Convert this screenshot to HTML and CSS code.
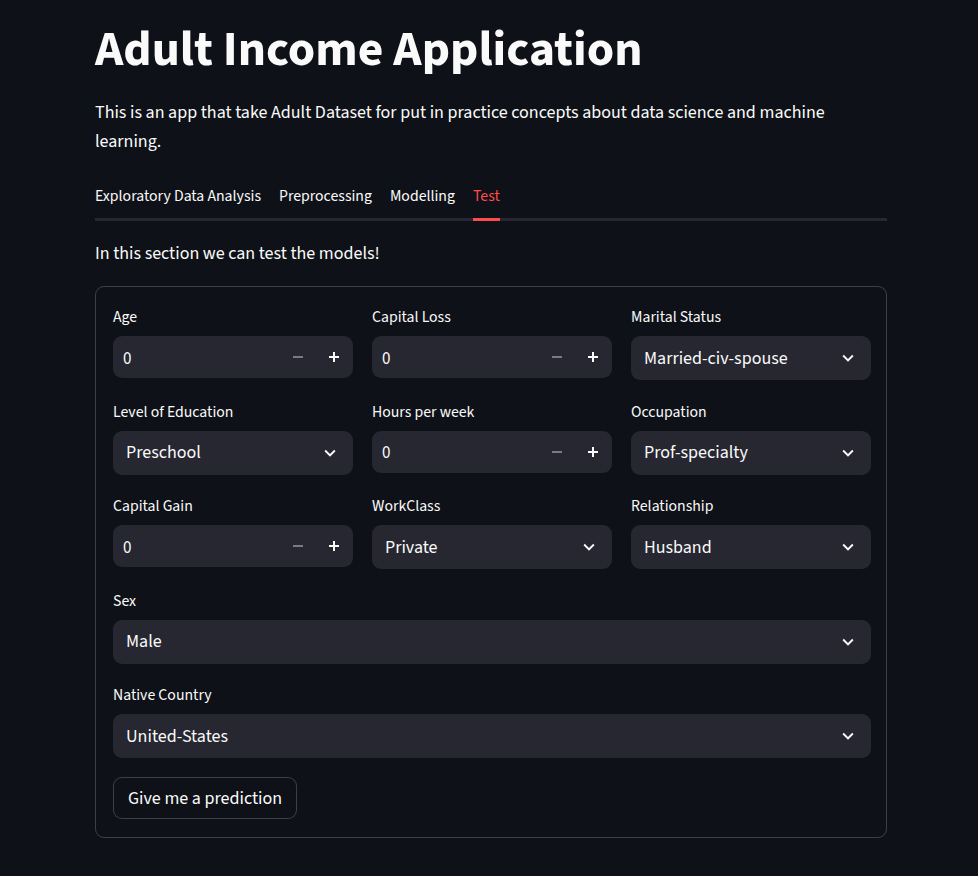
FILE: index.html
```html
<!DOCTYPE html>
<html lang="en">
<head>
<meta charset="utf-8">
<title>Adult Income Application</title>
<link rel="stylesheet" href="styles.css">
</head>
<body>
<main class="main">
  <h1 class="title">Adult Income Application</h1>
  <p class="intro">This is an app that take Adult Dataset for put in practice concepts about data science and machine learning.</p>

  <nav class="tabs">
    <span class="tab">Exploratory Data Analysis</span>
    <span class="tab">Preprocessing</span>
    <span class="tab">Modelling</span>
    <span class="tab active">Test</span>
  </nav>

  <p class="section">In this section we can test the models!</p>

  <form class="form">
    <div class="grid">
      <div class="field">
        <label class="label">Age</label>
        <div class="number">
          <span class="value">0</span>
          <span class="step minus"><svg viewBox="0 0 10 10" width="10" height="10"><path d="M0 5h10" stroke="currentColor" stroke-width="2"/></svg></span>
          <span class="step plus"><svg viewBox="0 0 10 10" width="10" height="10"><path d="M0 5h10M5 0v10" stroke="currentColor" stroke-width="2"/></svg></span>
        </div>
      </div>
      <div class="field">
        <label class="label">Capital Loss</label>
        <div class="number">
          <span class="value">0</span>
          <span class="step minus"><svg viewBox="0 0 10 10" width="10" height="10"><path d="M0 5h10" stroke="currentColor" stroke-width="2"/></svg></span>
          <span class="step plus"><svg viewBox="0 0 10 10" width="10" height="10"><path d="M0 5h10M5 0v10" stroke="currentColor" stroke-width="2"/></svg></span>
        </div>
      </div>
      <div class="field">
        <label class="label">Marital Status</label>
        <div class="select">
          <span class="value">Married-civ-spouse</span>
          <svg class="chev" viewBox="0 0 24 24" width="22" height="22"><path d="M16.59 8.59L12 13.17 7.41 8.59 6 10l6 6 6-6z" fill="currentColor"/></svg>
        </div>
      </div>

      <div class="field">
        <label class="label">Level of Education</label>
        <div class="select">
          <span class="value">Preschool</span>
          <svg class="chev" viewBox="0 0 24 24" width="22" height="22"><path d="M16.59 8.59L12 13.17 7.41 8.59 6 10l6 6 6-6z" fill="currentColor"/></svg>
        </div>
      </div>
      <div class="field">
        <label class="label">Hours per week</label>
        <div class="number">
          <span class="value">0</span>
          <span class="step minus"><svg viewBox="0 0 10 10" width="10" height="10"><path d="M0 5h10" stroke="currentColor" stroke-width="2"/></svg></span>
          <span class="step plus"><svg viewBox="0 0 10 10" width="10" height="10"><path d="M0 5h10M5 0v10" stroke="currentColor" stroke-width="2"/></svg></span>
        </div>
      </div>
      <div class="field">
        <label class="label">Occupation</label>
        <div class="select">
          <span class="value">Prof-specialty</span>
          <svg class="chev" viewBox="0 0 24 24" width="22" height="22"><path d="M16.59 8.59L12 13.17 7.41 8.59 6 10l6 6 6-6z" fill="currentColor"/></svg>
        </div>
      </div>

      <div class="field">
        <label class="label">Capital Gain</label>
        <div class="number">
          <span class="value">0</span>
          <span class="step minus"><svg viewBox="0 0 10 10" width="10" height="10"><path d="M0 5h10" stroke="currentColor" stroke-width="2"/></svg></span>
          <span class="step plus"><svg viewBox="0 0 10 10" width="10" height="10"><path d="M0 5h10M5 0v10" stroke="currentColor" stroke-width="2"/></svg></span>
        </div>
      </div>
      <div class="field">
        <label class="label">WorkClass</label>
        <div class="select">
          <span class="value">Private</span>
          <svg class="chev" viewBox="0 0 24 24" width="22" height="22"><path d="M16.59 8.59L12 13.17 7.41 8.59 6 10l6 6 6-6z" fill="currentColor"/></svg>
        </div>
      </div>
      <div class="field">
        <label class="label">Relationship</label>
        <div class="select">
          <span class="value">Husband</span>
          <svg class="chev" viewBox="0 0 24 24" width="22" height="22"><path d="M16.59 8.59L12 13.17 7.41 8.59 6 10l6 6 6-6z" fill="currentColor"/></svg>
        </div>
      </div>

      <div class="field wide">
        <label class="label">Sex</label>
        <div class="select">
          <span class="value">Male</span>
          <svg class="chev" viewBox="0 0 24 24" width="22" height="22"><path d="M16.59 8.59L12 13.17 7.41 8.59 6 10l6 6 6-6z" fill="currentColor"/></svg>
        </div>
      </div>
      <div class="field wide">
        <label class="label">Native Country</label>
        <div class="select">
          <span class="value">United-States</span>
          <svg class="chev" viewBox="0 0 24 24" width="22" height="22"><path d="M16.59 8.59L12 13.17 7.41 8.59 6 10l6 6 6-6z" fill="currentColor"/></svg>
        </div>
      </div>
    </div>
    <button type="button" class="btn">Give me a prediction</button>
  </form>
</main>
</body>
</html>
```

FILE: styles.css
```css
* { box-sizing: border-box; }

html, body {
  margin: 0;
  padding: 0;
  background: #0e1117;
  color: #fafafa;
  font-family: "Source Sans Pro", "Source Sans 3", Lato, "Liberation Sans", sans-serif;
}

.main {
  width: 792px;
  margin-left: 95px;
}

.title {
  margin: 0;
  padding-top: 20px;
  font-size: 49.5px;
  line-height: 60px;
  font-weight: 700;
}

.intro {
  margin: 18px 0 0;
  font-size: 18px;
  line-height: 29px;
}

.tabs {
  display: flex;
  gap: 18px;
  margin-top: 20px;
  border-bottom: 3px solid #262730;
}

.tab {
  position: relative;
  height: 42px;
  padding-top: 8px;
  font-size: 15.75px;
  line-height: 24px;
  color: #fafafa;
}

.tab.active {
  color: #ff4b4b;
}

.tab.active::after {
  content: "";
  position: absolute;
  left: 0;
  right: 0;
  bottom: -3px;
  height: 3px;
  background: #ff4b4b;
}

.section {
  margin: 18px 0 0;
  font-size: 18px;
  line-height: 29px;
}

.form {
  margin-top: 18px;
  border: 1px solid rgba(250, 250, 250, 0.2);
  border-radius: 9px;
  padding: 20px 15px 18px 17px;
}

.grid {
  display: grid;
  grid-template-columns: repeat(3, 1fr);
  column-gap: 19px;
  row-gap: 21.5px;
}

.field.wide {
  grid-column: 1 / -1;
}

.label {
  display: block;
  height: 20px;
  line-height: 20px;
  font-size: 15.75px;
  margin-bottom: 9px;
}

.number {
  display: flex;
  align-items: center;
  height: 42px;
  margin-top: 1px;
  background: #262730;
  border-radius: 9px;
  padding-left: 10px;
}

.number .value {
  flex: 1;
  font-size: 17px;
  padding-top: 3px;
}

.step {
  width: 36px;
  height: 42px;
  display: flex;
  align-items: center;
  justify-content: center;
  color: #fafafa;
}

.step.minus {
  color: rgba(250, 250, 250, 0.4);
}

.step.plus {
  margin-right: 1px;
}

.select {
  display: flex;
  align-items: center;
  height: 44px;
  background: #262730;
  border-radius: 9px;
  padding: 0 12px 0 13px;
}

.select .value {
  flex: 1;
  font-size: 18px;
}

.chev {
  color: #fafafa;
  display: block;
}

.btn {
  margin-top: 19px;
  height: 42px;
  padding: 0 14px;
  background: #0e1117;
  border: 1px solid rgba(250, 250, 250, 0.2);
  border-radius: 9px;
  color: #fafafa;
  font-family: inherit;
  font-size: 18px;
  cursor: pointer;
}
```
